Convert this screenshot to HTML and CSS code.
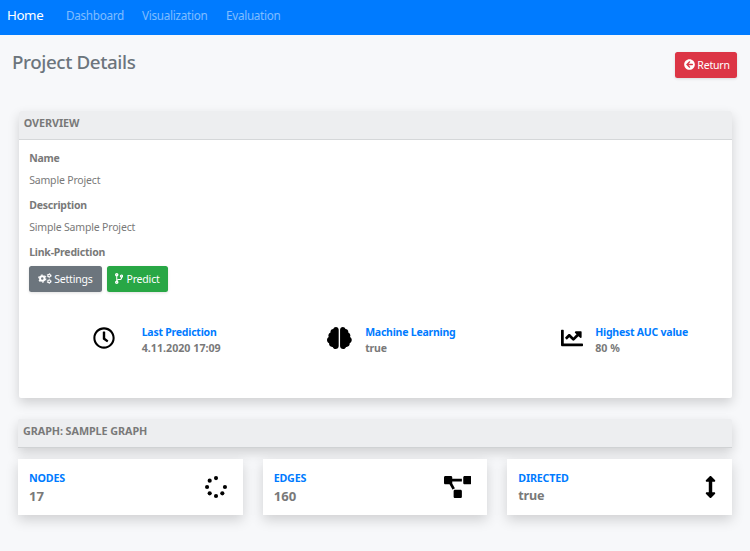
FILE: index.html
```
<!DOCTYPE html>
<html lang="en">
<head>
<meta charset="utf-8">
<title>Project Details</title>
<link rel="stylesheet" href="styles.css">
</head>
<body>
<nav class="navbar">
  <a class="brand">Home</a>
  <a class="nav-link dashboard">Dashboard</a>
  <a class="nav-link visualization">Visualization</a>
  <a class="nav-link">Evaluation</a>
</nav>
<header class="page-head">
  <h1>Project Details</h1>
  <button class="btn danger"><svg class="icon-sm" viewBox="0 0 512 512"><path d="M256 504C119 504 8 393 8 256S119 8 256 8s248 111 248 248-111 248-248 248zm28.9-143.6L209.4 288H392c13.3 0 24-10.7 24-24v-16c0-13.3-10.7-24-24-24H209.4l75.5-72.4c9.7-9.3 9.9-24.8.4-34.3l-11-10.9c-9.4-9.4-24.6-9.4-33.9 0L107.7 239c-9.4 9.4-9.4 24.6 0 33.9l132.7 132.7c9.4 9.4 24.6 9.4 33.9 0l11-10.9c9.5-9.5 9.3-25-.4-34.3z"/></svg>Return</button>
</header>
<main>
  <section class="card overview">
    <h2 class="card-header">OVERVIEW</h2>
    <div class="card-body">
      <h3>Name</h3>
      <p>Sample Project</p>
      <h3>Description</h3>
      <p>Simple Sample Project</p>
      <h3>Link-Prediction</h3>
      <div class="actions">
        <button class="btn secondary"><svg class="icon-cogs" viewBox="0 0 640 512">
          <circle class="gear" cx="193" cy="256" r="103" stroke-width="90"/>
          <circle class="gear" cx="193" cy="256" r="166" stroke-width="52" stroke-dasharray="87 87"/>
          <circle class="gear" cx="514" cy="122" r="63" stroke-width="54"/>
          <circle class="gear" cx="514" cy="122" r="98" stroke-width="32" stroke-dasharray="51.3 51.3"/>
          <circle class="gear" cx="514" cy="390" r="63" stroke-width="54"/>
          <circle class="gear" cx="514" cy="390" r="98" stroke-width="32" stroke-dasharray="51.3 51.3"/>
        </svg>Settings</button>
        <button class="btn success"><svg class="icon-branch" viewBox="0 0 384 512"><path d="M384 144c0-44.2-35.8-80-80-80s-80 35.8-80 80c0 36.4 24.3 67.1 57.5 76.8-.6 16.1-4.2 28.5-11 36.9-15.4 19.2-49.3 22.4-85.2 25.7-28.2 2.6-57.4 5.4-81.3 16.9v-144c32.5-10.2 56-40.5 56-76.3 0-44.2-35.8-80-80-80S0 35.8 0 80c0 35.8 23.5 66.1 56 76.3v199.3C23.5 365.9 0 396.2 0 432c0 44.2 35.8 80 80 80s80-35.8 80-80c0-34-21.2-63.1-51.2-74.6 3.1-5.2 7.8-9.8 14.9-13.4 16.2-8.2 40.4-10.4 66.1-12.8 42.2-3.9 90-8.4 118.2-43.4 14-17.4 21.1-39.8 21.6-67.9 31.6-10.8 54.4-40.7 54.4-75.9zM80 64c8.8 0 16 7.2 16 16s-7.2 16-16 16-16-7.2-16-16 7.2-16 16-16zm0 384c-8.8 0-16-7.2-16-16s7.2-16 16-16 16 7.2 16 16-7.2 16-16 16zm224-320c8.8 0 16 7.2 16 16s-7.2 16-16 16-16-7.2-16-16 7.2-16 16-16z"/></svg>Predict</button>
      </div>
      <div class="stats">
        <svg class="icon" viewBox="0 0 512 512"><path d="M256 8C119 8 8 119 8 256s111 248 248 248 248-111 248-248S393 8 256 8zm0 448c-110.5 0-200-89.5-200-200S145.5 56 256 56s200 89.5 200 200-89.5 200-200 200zm61.8-104.4l-84.9-61.7c-3.1-2.3-4.9-5.9-4.9-9.7V116c0-6.6 5.4-12 12-12h32c6.6 0 12 5.4 12 12v141.7l66.8 48.6c5.4 3.9 6.5 11.4 2.6 16.8L334.6 349c-3.9 5.3-11.4 6.5-16.8 2.6z"/></svg>
        <div><div class="label">Last Prediction</div><div class="value digits">4.11.2020 17:09</div></div>
        <svg class="icon" viewBox="0 0 576 512"><path d="M208 0c-29.9 0-54.7 20.5-61.8 48.2-.8 0-1.4-.2-2.2-.2-35.3 0-64 28.7-64 64 0 4.8.6 9.5 1.7 14C52.5 138 32 166.6 32 200c0 12.6 3.2 24.3 8.3 34.9C16.3 248.7 0 274.3 0 304c0 33.3 20.4 61.9 49.4 73.9-.9 4.6-1.4 9.3-1.4 14.1 0 39.8 32.2 72 72 72 4.1 0 8.1-.5 12-1.2 9.6 28.5 36.2 49.2 68 49.2 39.8 0 72-32.2 72-72V64c0-35.3-28.7-64-64-64zm368 304c0-29.7-16.3-55.3-40.3-69.1 5.2-10.6 8.3-22.3 8.3-34.9 0-33.4-20.5-62-49.7-74 1-4.5 1.7-9.2 1.7-14 0-35.3-28.7-64-64-64-.8 0-1.5.2-2.2.2C422.7 20.5 397.9 0 368 0c-35.3 0-64 28.6-64 64v376c0 39.8 32.2 72 72 72 31.8 0 58.4-20.7 68-49.2 3.9.7 7.9 1.2 12 1.2 39.8 0 72-32.2 72-72 0-4.8-.5-9.5-1.4-14.1 29-12 49.4-40.6 49.4-73.9z"/></svg>
        <div><div class="label">Machine Learning</div><div class="value">true</div></div>
        <svg class="icon" viewBox="0 0 512 512"><path d="M496 384H64V80c0-8.84-7.16-16-16-16H16C7.16 64 0 71.16 0 80v336c0 17.67 14.33 32 32 32h464c8.84 0 16-7.16 16-16v-32c0-8.84-7.16-16-16-16zM464 96H345.94c-21.38 0-32.09 25.85-16.97 40.97l32.4 32.4L288 242.75l-73.37-73.37c-12.5-12.5-32.76-12.5-45.25 0l-68.69 68.69c-6.25 6.25-6.25 16.38 0 22.63l22.62 22.62c6.25 6.25 16.38 6.25 22.63 0L192 237.25l73.37 73.37c12.5 12.5 32.76 12.5 45.25 0l96-96 32.4 32.4c15.12 15.12 40.97 4.41 40.97-16.97V112c.01-8.84-7.15-16-16-16z"/></svg>
        <div><div class="label">Highest AUC value</div><div class="value digits">80 %</div></div>
      </div>
    </div>
  </section>
  <h2 class="card-header graph-header">GRAPH: SAMPLE GRAPH</h2>
  <section class="tiles">
    <div class="card tile">
      <div><div class="tile-label">NODES</div><div class="tile-value">17</div></div>
      <svg class="icon" viewBox="0 0 512 512"><circle cx="256" cy="48" r="48"/><circle cx="256" cy="464" r="48"/><circle cx="48" cy="256" r="48"/><circle cx="464" cy="256" r="48"/><circle cx="109" cy="109" r="48"/><circle cx="109" cy="403" r="48"/><circle cx="403" cy="403" r="48"/></svg>
    </div>
    <div class="card tile">
      <div><div class="tile-label">EDGES</div><div class="tile-value">160</div></div>
      <svg class="icon" viewBox="0 0 640 512"><path d="M384 320H256c-17.67 0-32 14.33-32 32v128c0 17.67 14.33 32 32 32h128c17.67 0 32-14.33 32-32V352c0-17.67-14.33-32-32-32zM192 32c0-17.67-14.33-32-32-32H32C14.33 0 0 14.33 0 32v128c0 17.67 14.33 32 32 32h95.72l73.16 128.04C211.98 300.98 232.4 288 256 288h.28L192 175.51V128h224V64H192V32zM608 0H480c-17.67 0-32 14.33-32 32v128c0 17.67 14.33 32 32 32h128c17.67 0 32-14.33 32-32V32c0-17.67-14.33-32-32-32z"/></svg>
    </div>
    <div class="card tile">
      <div><div class="tile-label">DIRECTED</div><div class="tile-value word">true</div></div>
      <svg class="icon" viewBox="0 0 256 512"><path d="M214.059 377.941H168V134.059h46.059c21.382 0 32.09-25.851 16.971-40.971L144.971 7.029c-9.373-9.373-24.568-9.373-33.941 0L24.971 93.088c-15.119 15.119-4.411 40.971 16.971 40.971H88v243.882H41.941c-21.382 0-32.09 25.851-16.971 40.971l86.059 86.059c9.373 9.373 24.568 9.373 33.941 0l86.059-86.059c15.12-15.119 4.412-40.971-16.97-40.971z"/></svg>
    </div>
  </section>
</main>
</body>
</html>
```
FILE: styles.css
```
* { box-sizing: border-box; }
body {
  margin: 0;
  height: 551px;
  overflow: hidden;
  background: #f7f8fa;
  color: #797979;
  font: 10.5px/16px "Noto Sans", "Open Sans", sans-serif;
  letter-spacing: -.18px;
}
h1, h2, h3, p { margin: 0; }
svg { display: block; flex: none; fill: currentColor; }

.navbar {
  display: flex;
  align-items: center;
  height: 35px;
  padding: 0 0 5px 7px;
  background: #007bff;
}
.brand { width: 59px; color: #fff; font-size: 13.3px; letter-spacing: -.4px; }
.nav-link { color: rgba(255, 255, 255, .5); font-size: 11.7px; letter-spacing: -.28px; }
.dashboard { width: 76px; }
.visualization { width: 84px; }

.page-head {
  display: flex;
  justify-content: space-between;
  height: 76px;
  padding: 17px 12.7px 0 12px;
}
h1 {
  margin-top: -1px;
  color: #6c757d;
  font-size: 18.8px;
  font-weight: 500;
  line-height: 22px;
  letter-spacing: -.4px;
}

.btn {
  display: flex;
  align-items: center;
  height: 25.5px;
  padding: 0 8.5px;
  border: 0;
  border-radius: 2.5px;
  color: #fff;
  font: inherit;
  letter-spacing: inherit;
  box-shadow: 0 1px 3px rgba(0, 0, 0, .12);
}
.danger { width: 62px; background: #dc3545; }
.secondary { width: 72.5px; background: #6c757d; }
.success { width: 61px; background: #28a745; }
.icon-sm { width: 11px; height: 11px; margin-right: 2.5px; }
.icon-cogs { width: 14px; height: 11px; margin-right: 2.5px; }
.icon-branch { width: 8.3px; height: 11px; margin-right: 3px; }
.gear { fill: none; stroke: currentColor; }

main { padding: 0 18px; }
.card { background: #fff; box-shadow: 0 5px 12px rgba(0, 0, 0, .16); }
.card-header {
  height: 29px;
  padding: 4px 5px 0;
  border-bottom: 1px solid #d5d7d9;
  border-radius: 2px 2px 0 0;
  background: #edeef0;
  font-size: 10.8px;
  font-weight: 700;
  letter-spacing: -.08px;
}
.overview { height: 287px; margin: 0 .3px 21px .7px; border-radius: 2px; }
.card-body { padding: 9px 10.5px 0; }
h3 { font-size: 10.5px; line-height: 18px; letter-spacing: -.22px; }
p { height: 29px; padding-top: 4px; line-height: 18px; }
.actions { display: flex; gap: 5px; margin-top: 5px; }

.stats {
  display: grid;
  grid-template-columns: 48.5px 185.5px 38px 195.5px 34.5px 1fr;
  align-items: center;
  padding-left: 64px;
  margin-top: 32px;
}
.icon { height: 22px; color: #000; }
.stats .icon { margin-bottom: 4px; }
.label { color: #007bff; font-weight: 700; letter-spacing: -.23px; }
.value { font-weight: 700; line-height: 17px; }
.digits { font-size: 10.7px; letter-spacing: 0; }

.graph-header {
  border-bottom-color: #d0d2d4;
  box-shadow: 0 5px 12px rgba(0, 0, 0, .16);
}
.tiles { display: grid; grid-template-columns: repeat(3, 1fr); gap: 20px; margin-top: 11px; }
.tile {
  display: flex;
  justify-content: space-between;
  align-items: center;
  height: 55.5px;
  padding: 0 16px 0 11px;
}
.tile > div { padding-top: 2px; }
.tile-label { color: #007bff; font-size: 10.7px; font-weight: 700; }
.tile-value { font-size: 13.1px; font-weight: 700; line-height: 20px; letter-spacing: 0; }
.word { font-size: 12.6px; letter-spacing: -.2px; }
```
